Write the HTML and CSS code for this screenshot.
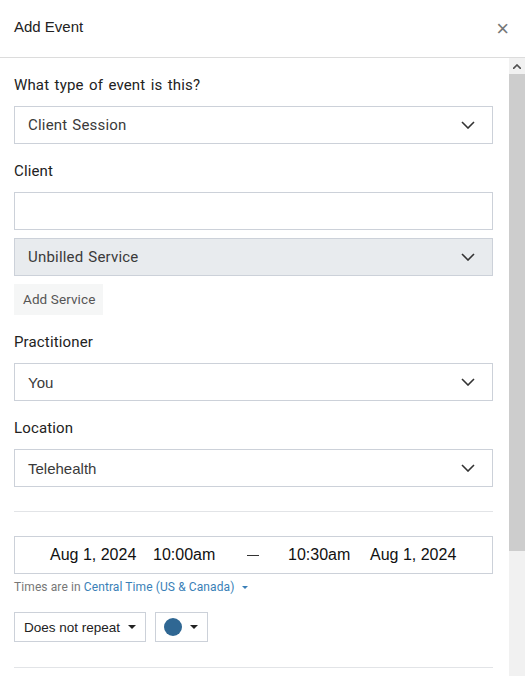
FILE: index.html
```html
<!DOCTYPE html>
<html>
<head>
<meta charset="utf-8">
<link rel="stylesheet" href="styles.css">
</head>
<body>
<div class="modal">
  <header class="head">
    <h1 class="title">Add Event</h1>
    <span class="close">×</span>
  </header>
  <div class="bodyrow">
    <div class="content">
      <div class="label first">What type of event is this?</div>
      <div class="select plex"><span>Client Session</span><svg class="chev" viewBox="0 0 14 8" width="14" height="8"><path d="M1 1l6 6 6-6" fill="none" stroke="#333" stroke-width="1.6"/></svg></div>

      <div class="label">Client</div>
      <div class="input"></div>
      <div class="select grey plex"><span>Unbilled Service</span><svg class="chev" viewBox="0 0 14 8" width="14" height="8"><path d="M1 1l6 6 6-6" fill="none" stroke="#333" stroke-width="1.6"/></svg></div>
      <div class="addsvc">Add Service</div>

      <div class="label">Practitioner</div>
      <div class="select arial"><span>You</span><svg class="chev" viewBox="0 0 14 8" width="14" height="8"><path d="M1 1l6 6 6-6" fill="none" stroke="#333" stroke-width="1.6"/></svg></div>

      <div class="label">Location</div>
      <div class="select arial"><span>Telehealth</span><svg class="chev" viewBox="0 0 14 8" width="14" height="8"><path d="M1 1l6 6 6-6" fill="none" stroke="#333" stroke-width="1.6"/></svg></div>

      <hr class="divider">

      <div class="dates">
        <span class="d1">Aug 1, 2024</span>
        <span class="t1">10:00am</span>
        <span class="dash"></span>
        <span class="t2">10:30am</span>
        <span class="d2">Aug 1, 2024</span>
      </div>
      <div class="tz">Times are in <span class="tzlink">Central Time (US &amp; Canada)</span><span class="caret small"></span></div>

      <div class="btnrow">
        <div class="btn">Does not repeat<span class="caret"></span></div>
        <div class="btn colorbtn"><span class="dot"></span><span class="caret"></span></div>
      </div>
      <hr class="divider last">
    </div>
    <div class="scrollbar">
      <div class="sb-up"><svg viewBox="0 0 8 5" width="8" height="5"><path d="M0 5L4 1 8 5" fill="none" stroke="#505050" stroke-width="1.6"/></svg></div>
      <div class="sb-thumb"></div>
      <div class="sb-track"></div>
    </div>
  </div>
</div>
</body>
</html>
```

FILE: styles.css
```css
html, body { margin: 0; padding: 0; background: #fff; }
body { width: 525px; height: 676px; overflow: hidden; font-family: Roboto, "Noto Sans", sans-serif; color: #222; }
.modal { width: 525px; height: 676px; display: flex; flex-direction: column; }
.head { height: 57px; border-bottom: 1px solid #dcdcdc; display: flex; align-items: center; justify-content: space-between; padding: 0 14px; box-sizing: content-box; flex: none; }
.title { margin: 0; font-family: "Liberation Sans", Arial, sans-serif; font-weight: normal; font-size: 15px; color: #222; position: relative; top: -2px; }
.close { font-family: "Liberation Sans", Arial, sans-serif; font-size: 22px; color: #777; position: relative; left: -2px; }
.bodyrow { flex: 1; display: flex; min-height: 0; }
.content { width: 479px; padding: 0 16px 0 14px; overflow: hidden; }
.label { font-size: 15px; color: #222; margin: 17px 0 11px; line-height: 20px; font-family: Roboto, sans-serif; letter-spacing: 0.15px; word-spacing: 1.5px; }
.label.first { margin-top: 17px; margin-bottom: 11px; }
.select { height: 38px; box-sizing: border-box; border: 1px solid #ccd1d9; display: flex; align-items: center; justify-content: space-between; padding: 0 17px 0 13px; font-size: 15px; color: #3a3a3a; }
.select.plex { font-family: Roboto, sans-serif; letter-spacing: 0.2px; word-spacing: 1px; }
.select.arial { font-family: "Liberation Sans", Arial, sans-serif; }
.select.grey { background: #e8ebee; margin-top: 8px; }
.chev { display: block; }
.input { height: 38px; box-sizing: border-box; border: 1px solid #ccd1d9; }
.addsvc { width: fit-content; margin-top: 8px; height: 31px; line-height: 31px; padding: 0 8px 0 9px; background: #f5f6f6; font-size: 13.5px; color: #555; font-family: Roboto, sans-serif; letter-spacing: 0.1px; }
.divider { border: 0; border-top: 1px solid #e2e4e7; margin: 24px 0 0; height: 0; }
.dates { margin-top: 24px; height: 38px; box-sizing: border-box; border: 1px solid #ccd1d9; display: flex; align-items: center; font-family: "Liberation Sans", Arial, sans-serif; font-size: 16px; color: #111; padding-left: 35px; }
.d1 { width: 103px; }
.t1 { width: 94px; }
.dash { width: 12px; height: 1px; background: #333; margin-right: 29px; }
.t2 { width: 82px; }
.tz { font-size: 12px; color: #777; margin-top: 6px; font-family: Roboto, sans-serif; display: flex; align-items: center; white-space: pre; letter-spacing: 0.1px; }
.tzlink { color: #3a7fb7; }
.caret { display: inline-block; width: 0; height: 0; border-left: 4px solid transparent; border-right: 4px solid transparent; border-top: 4px solid #222; margin-left: 8px; }
.caret.small { border-left-width: 3px; border-right-width: 3px; border-top: 3px solid #3a7fb7; margin-left: 8px; }
.btnrow { display: flex; gap: 9px; margin-top: 18px; }
.btn { height: 30px; box-sizing: border-box; border: 1px solid #ccd1d9; display: flex; align-items: center; padding: 0 9px; font-family: "Liberation Sans", Arial, sans-serif; font-size: 13.5px; color: #222; }
.colorbtn { padding: 0 8px; width: 53px; }
.dot { width: 18px; height: 18px; border-radius: 50%; background: #2f6793; }
.divider.last { margin-top: 25px; }
.scrollbar { width: 16px; flex: none; background: #f1f1f1; display: flex; flex-direction: column; }
.sb-up { height: 16px; display: flex; align-items: center; justify-content: center; }
.sb-thumb { height: 477px; background: #cdcdcd; }
.sb-track { flex: 1; }
```
